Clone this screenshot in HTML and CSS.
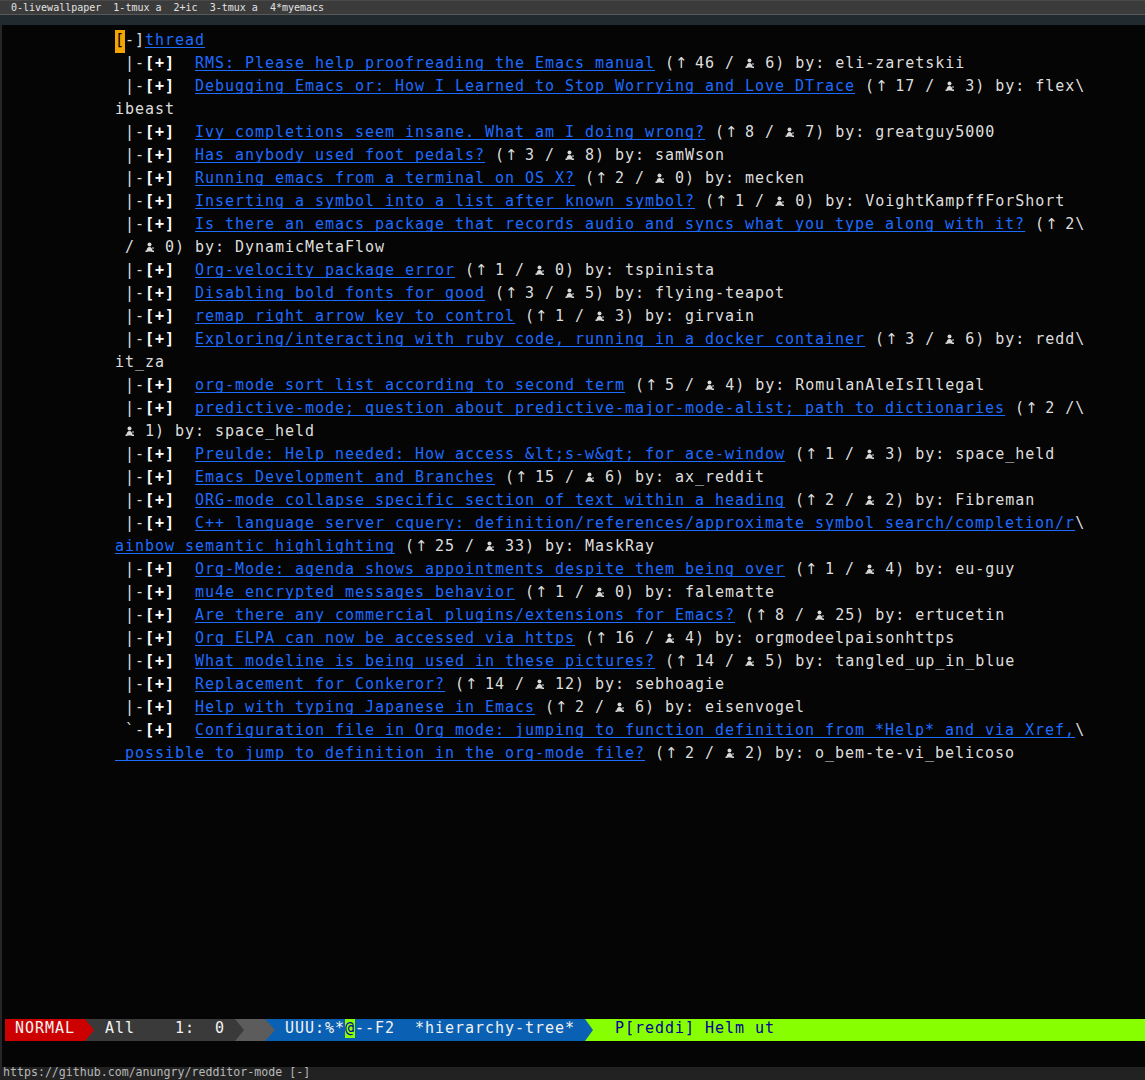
FILE: index.html
```html
<!DOCTYPE html>
<html>
<head>
<meta charset="utf-8">
<link rel="stylesheet" href="styles.css">
</head>
<body>
<div class="tmux">0-livewallpaper  1-tmux a  2+ic  3-tmux a  4*myemacs</div>
<div class="band"></div>
<div class="emacs">
  <div class="buf">
    <div class="l"><span class="cur">[</span>-]<a class="lk">thread</a></div>
    <div class="l"> |-<b>[+]</b>  <a class="lk">RMS: Please help proofreading the Emacs manual</a> (<span class="up">↑</span> 46 / <span class="ic"><svg width="10" height="10" viewBox="0 0 10 10"><circle cx="4.5" cy="2.5" r="2"/><path d="M1.5 9.5 Q1.5 5 4.5 5 Q7.5 5 7.5 9.5 Z"/><rect x="0.5" y="8.5" width="2" height="1.5"/><rect x="6.5" y="8.5" width="2.5" height="1.5"/><rect x="7" y="5.5" width="2" height="1"/></svg></span> 6) by: eli-zaretskii</div>
    <div class="l"> |-<b>[+]</b>  <a class="lk">Debugging Emacs or: How I Learned to Stop Worrying and Love DTrace</a> (<span class="up">↑</span> 17 / <span class="ic"><svg width="10" height="10" viewBox="0 0 10 10"><circle cx="4.5" cy="2.5" r="2"/><path d="M1.5 9.5 Q1.5 5 4.5 5 Q7.5 5 7.5 9.5 Z"/><rect x="0.5" y="8.5" width="2" height="1.5"/><rect x="6.5" y="8.5" width="2.5" height="1.5"/><rect x="7" y="5.5" width="2" height="1"/></svg></span> 3) by: flex\</div>
    <div class="l">ibeast</div>
    <div class="l"> |-<b>[+]</b>  <a class="lk">Ivy completions seem insane. What am I doing wrong?</a> (<span class="up">↑</span> 8 / <span class="ic"><svg width="10" height="10" viewBox="0 0 10 10"><circle cx="4.5" cy="2.5" r="2"/><path d="M1.5 9.5 Q1.5 5 4.5 5 Q7.5 5 7.5 9.5 Z"/><rect x="0.5" y="8.5" width="2" height="1.5"/><rect x="6.5" y="8.5" width="2.5" height="1.5"/><rect x="7" y="5.5" width="2" height="1"/></svg></span> 7) by: greatguy5000</div>
    <div class="l"> |-<b>[+]</b>  <a class="lk">Has anybody used foot pedals?</a> (<span class="up">↑</span> 3 / <span class="ic"><svg width="10" height="10" viewBox="0 0 10 10"><circle cx="4.5" cy="2.5" r="2"/><path d="M1.5 9.5 Q1.5 5 4.5 5 Q7.5 5 7.5 9.5 Z"/><rect x="0.5" y="8.5" width="2" height="1.5"/><rect x="6.5" y="8.5" width="2.5" height="1.5"/><rect x="7" y="5.5" width="2" height="1"/></svg></span> 8) by: samWson</div>
    <div class="l"> |-<b>[+]</b>  <a class="lk">Running emacs from a terminal on OS X?</a> (<span class="up">↑</span> 2 / <span class="ic"><svg width="10" height="10" viewBox="0 0 10 10"><circle cx="4.5" cy="2.5" r="2"/><path d="M1.5 9.5 Q1.5 5 4.5 5 Q7.5 5 7.5 9.5 Z"/><rect x="0.5" y="8.5" width="2" height="1.5"/><rect x="6.5" y="8.5" width="2.5" height="1.5"/><rect x="7" y="5.5" width="2" height="1"/></svg></span> 0) by: mecken</div>
    <div class="l"> |-<b>[+]</b>  <a class="lk">Inserting a symbol into a list after known symbol?</a> (<span class="up">↑</span> 1 / <span class="ic"><svg width="10" height="10" viewBox="0 0 10 10"><circle cx="4.5" cy="2.5" r="2"/><path d="M1.5 9.5 Q1.5 5 4.5 5 Q7.5 5 7.5 9.5 Z"/><rect x="0.5" y="8.5" width="2" height="1.5"/><rect x="6.5" y="8.5" width="2.5" height="1.5"/><rect x="7" y="5.5" width="2" height="1"/></svg></span> 0) by: VoightKampffForShort</div>
    <div class="l"> |-<b>[+]</b>  <a class="lk">Is there an emacs package that records audio and syncs what you type along with it?</a> (<span class="up">↑</span> 2\</div>
    <div class="l"> / <span class="ic"><svg width="10" height="10" viewBox="0 0 10 10"><circle cx="4.5" cy="2.5" r="2"/><path d="M1.5 9.5 Q1.5 5 4.5 5 Q7.5 5 7.5 9.5 Z"/><rect x="0.5" y="8.5" width="2" height="1.5"/><rect x="6.5" y="8.5" width="2.5" height="1.5"/><rect x="7" y="5.5" width="2" height="1"/></svg></span> 0) by: DynamicMetaFlow</div>
    <div class="l"> |-<b>[+]</b>  <a class="lk">Org-velocity package error</a> (<span class="up">↑</span> 1 / <span class="ic"><svg width="10" height="10" viewBox="0 0 10 10"><circle cx="4.5" cy="2.5" r="2"/><path d="M1.5 9.5 Q1.5 5 4.5 5 Q7.5 5 7.5 9.5 Z"/><rect x="0.5" y="8.5" width="2" height="1.5"/><rect x="6.5" y="8.5" width="2.5" height="1.5"/><rect x="7" y="5.5" width="2" height="1"/></svg></span> 0) by: tspinista</div>
    <div class="l"> |-<b>[+]</b>  <a class="lk">Disabling bold fonts for good</a> (<span class="up">↑</span> 3 / <span class="ic"><svg width="10" height="10" viewBox="0 0 10 10"><circle cx="4.5" cy="2.5" r="2"/><path d="M1.5 9.5 Q1.5 5 4.5 5 Q7.5 5 7.5 9.5 Z"/><rect x="0.5" y="8.5" width="2" height="1.5"/><rect x="6.5" y="8.5" width="2.5" height="1.5"/><rect x="7" y="5.5" width="2" height="1"/></svg></span> 5) by: flying-teapot</div>
    <div class="l"> |-<b>[+]</b>  <a class="lk">remap right arrow key to control</a> (<span class="up">↑</span> 1 / <span class="ic"><svg width="10" height="10" viewBox="0 0 10 10"><circle cx="4.5" cy="2.5" r="2"/><path d="M1.5 9.5 Q1.5 5 4.5 5 Q7.5 5 7.5 9.5 Z"/><rect x="0.5" y="8.5" width="2" height="1.5"/><rect x="6.5" y="8.5" width="2.5" height="1.5"/><rect x="7" y="5.5" width="2" height="1"/></svg></span> 3) by: girvain</div>
    <div class="l"> |-<b>[+]</b>  <a class="lk">Exploring/interacting with ruby code, running in a docker container</a> (<span class="up">↑</span> 3 / <span class="ic"><svg width="10" height="10" viewBox="0 0 10 10"><circle cx="4.5" cy="2.5" r="2"/><path d="M1.5 9.5 Q1.5 5 4.5 5 Q7.5 5 7.5 9.5 Z"/><rect x="0.5" y="8.5" width="2" height="1.5"/><rect x="6.5" y="8.5" width="2.5" height="1.5"/><rect x="7" y="5.5" width="2" height="1"/></svg></span> 6) by: redd\</div>
    <div class="l">it_za</div>
    <div class="l"> |-<b>[+]</b>  <a class="lk">org-mode sort list according to second term</a> (<span class="up">↑</span> 5 / <span class="ic"><svg width="10" height="10" viewBox="0 0 10 10"><circle cx="4.5" cy="2.5" r="2"/><path d="M1.5 9.5 Q1.5 5 4.5 5 Q7.5 5 7.5 9.5 Z"/><rect x="0.5" y="8.5" width="2" height="1.5"/><rect x="6.5" y="8.5" width="2.5" height="1.5"/><rect x="7" y="5.5" width="2" height="1"/></svg></span> 4) by: RomulanAleIsIllegal</div>
    <div class="l"> |-<b>[+]</b>  <a class="lk">predictive-mode; question about predictive-major-mode-alist; path to dictionaries</a> (<span class="up">↑</span> 2 /\</div>
    <div class="l"> <span class="ic"><svg width="10" height="10" viewBox="0 0 10 10"><circle cx="4.5" cy="2.5" r="2"/><path d="M1.5 9.5 Q1.5 5 4.5 5 Q7.5 5 7.5 9.5 Z"/><rect x="0.5" y="8.5" width="2" height="1.5"/><rect x="6.5" y="8.5" width="2.5" height="1.5"/><rect x="7" y="5.5" width="2" height="1"/></svg></span> 1) by: space_held</div>
    <div class="l"> |-<b>[+]</b>  <a class="lk">Preulde: Help needed: How access &amp;lt;s-w&amp;gt; for ace-window</a> (<span class="up">↑</span> 1 / <span class="ic"><svg width="10" height="10" viewBox="0 0 10 10"><circle cx="4.5" cy="2.5" r="2"/><path d="M1.5 9.5 Q1.5 5 4.5 5 Q7.5 5 7.5 9.5 Z"/><rect x="0.5" y="8.5" width="2" height="1.5"/><rect x="6.5" y="8.5" width="2.5" height="1.5"/><rect x="7" y="5.5" width="2" height="1"/></svg></span> 3) by: space_held</div>
    <div class="l"> |-<b>[+]</b>  <a class="lk">Emacs Development and Branches</a> (<span class="up">↑</span> 15 / <span class="ic"><svg width="10" height="10" viewBox="0 0 10 10"><circle cx="4.5" cy="2.5" r="2"/><path d="M1.5 9.5 Q1.5 5 4.5 5 Q7.5 5 7.5 9.5 Z"/><rect x="0.5" y="8.5" width="2" height="1.5"/><rect x="6.5" y="8.5" width="2.5" height="1.5"/><rect x="7" y="5.5" width="2" height="1"/></svg></span> 6) by: ax_reddit</div>
    <div class="l"> |-<b>[+]</b>  <a class="lk">ORG-mode collapse specific section of text within a heading</a> (<span class="up">↑</span> 2 / <span class="ic"><svg width="10" height="10" viewBox="0 0 10 10"><circle cx="4.5" cy="2.5" r="2"/><path d="M1.5 9.5 Q1.5 5 4.5 5 Q7.5 5 7.5 9.5 Z"/><rect x="0.5" y="8.5" width="2" height="1.5"/><rect x="6.5" y="8.5" width="2.5" height="1.5"/><rect x="7" y="5.5" width="2" height="1"/></svg></span> 2) by: Fibreman</div>
    <div class="l"> |-<b>[+]</b>  <a class="lk">C++ language server cquery: definition/references/approximate symbol search/completion/r</a>\</div>
    <div class="l"><a class="lk">ainbow semantic highlighting</a> (<span class="up">↑</span> 25 / <span class="ic"><svg width="10" height="10" viewBox="0 0 10 10"><circle cx="4.5" cy="2.5" r="2"/><path d="M1.5 9.5 Q1.5 5 4.5 5 Q7.5 5 7.5 9.5 Z"/><rect x="0.5" y="8.5" width="2" height="1.5"/><rect x="6.5" y="8.5" width="2.5" height="1.5"/><rect x="7" y="5.5" width="2" height="1"/></svg></span> 33) by: MaskRay</div>
    <div class="l"> |-<b>[+]</b>  <a class="lk">Org-Mode: agenda shows appointments despite them being over</a> (<span class="up">↑</span> 1 / <span class="ic"><svg width="10" height="10" viewBox="0 0 10 10"><circle cx="4.5" cy="2.5" r="2"/><path d="M1.5 9.5 Q1.5 5 4.5 5 Q7.5 5 7.5 9.5 Z"/><rect x="0.5" y="8.5" width="2" height="1.5"/><rect x="6.5" y="8.5" width="2.5" height="1.5"/><rect x="7" y="5.5" width="2" height="1"/></svg></span> 4) by: eu-guy</div>
    <div class="l"> |-<b>[+]</b>  <a class="lk">mu4e encrypted messages behavior</a> (<span class="up">↑</span> 1 / <span class="ic"><svg width="10" height="10" viewBox="0 0 10 10"><circle cx="4.5" cy="2.5" r="2"/><path d="M1.5 9.5 Q1.5 5 4.5 5 Q7.5 5 7.5 9.5 Z"/><rect x="0.5" y="8.5" width="2" height="1.5"/><rect x="6.5" y="8.5" width="2.5" height="1.5"/><rect x="7" y="5.5" width="2" height="1"/></svg></span> 0) by: falematte</div>
    <div class="l"> |-<b>[+]</b>  <a class="lk">Are there any commercial plugins/extensions for Emacs?</a> (<span class="up">↑</span> 8 / <span class="ic"><svg width="10" height="10" viewBox="0 0 10 10"><circle cx="4.5" cy="2.5" r="2"/><path d="M1.5 9.5 Q1.5 5 4.5 5 Q7.5 5 7.5 9.5 Z"/><rect x="0.5" y="8.5" width="2" height="1.5"/><rect x="6.5" y="8.5" width="2.5" height="1.5"/><rect x="7" y="5.5" width="2" height="1"/></svg></span> 25) by: ertucetin</div>
    <div class="l"> |-<b>[+]</b>  <a class="lk">Org ELPA can now be accessed via https</a> (<span class="up">↑</span> 16 / <span class="ic"><svg width="10" height="10" viewBox="0 0 10 10"><circle cx="4.5" cy="2.5" r="2"/><path d="M1.5 9.5 Q1.5 5 4.5 5 Q7.5 5 7.5 9.5 Z"/><rect x="0.5" y="8.5" width="2" height="1.5"/><rect x="6.5" y="8.5" width="2.5" height="1.5"/><rect x="7" y="5.5" width="2" height="1"/></svg></span> 4) by: orgmodeelpaisonhttps</div>
    <div class="l"> |-<b>[+]</b>  <a class="lk">What modeline is being used in these pictures?</a> (<span class="up">↑</span> 14 / <span class="ic"><svg width="10" height="10" viewBox="0 0 10 10"><circle cx="4.5" cy="2.5" r="2"/><path d="M1.5 9.5 Q1.5 5 4.5 5 Q7.5 5 7.5 9.5 Z"/><rect x="0.5" y="8.5" width="2" height="1.5"/><rect x="6.5" y="8.5" width="2.5" height="1.5"/><rect x="7" y="5.5" width="2" height="1"/></svg></span> 5) by: tangled_up_in_blue</div>
    <div class="l"> |-<b>[+]</b>  <a class="lk">Replacement for Conkeror?</a> (<span class="up">↑</span> 14 / <span class="ic"><svg width="10" height="10" viewBox="0 0 10 10"><circle cx="4.5" cy="2.5" r="2"/><path d="M1.5 9.5 Q1.5 5 4.5 5 Q7.5 5 7.5 9.5 Z"/><rect x="0.5" y="8.5" width="2" height="1.5"/><rect x="6.5" y="8.5" width="2.5" height="1.5"/><rect x="7" y="5.5" width="2" height="1"/></svg></span> 12) by: sebhoagie</div>
    <div class="l"> |-<b>[+]</b>  <a class="lk">Help with typing Japanese in Emacs</a> (<span class="up">↑</span> 2 / <span class="ic"><svg width="10" height="10" viewBox="0 0 10 10"><circle cx="4.5" cy="2.5" r="2"/><path d="M1.5 9.5 Q1.5 5 4.5 5 Q7.5 5 7.5 9.5 Z"/><rect x="0.5" y="8.5" width="2" height="1.5"/><rect x="6.5" y="8.5" width="2.5" height="1.5"/><rect x="7" y="5.5" width="2" height="1"/></svg></span> 6) by: eisenvogel</div>
    <div class="l"> `-<b>[+]</b>  <a class="lk">Configuration file in Org mode: jumping to function definition from *Help* and via Xref,</a>\</div>
    <div class="l"><a class="lk"> possible to jump to definition in the org-mode file?</a> (<span class="up">↑</span> 2 / <span class="ic"><svg width="10" height="10" viewBox="0 0 10 10"><circle cx="4.5" cy="2.5" r="2"/><path d="M1.5 9.5 Q1.5 5 4.5 5 Q7.5 5 7.5 9.5 Z"/><rect x="0.5" y="8.5" width="2" height="1.5"/><rect x="6.5" y="8.5" width="2.5" height="1.5"/><rect x="7" y="5.5" width="2" height="1"/></svg></span> 2) by: o_bem-te-vi_belicoso</div>
  </div>
  <div class="ml">
    <div class="seg red"> NORMAL</div>
    <div class="seg dark"><svg class="arr" width="9" height="22" viewBox="0 0 9 22"><path d="M0 0 L9 11 L0 22 Z" fill="#cc0000"/></svg> All    1:  0</div>
    <div class="seg mid"><svg class="arr" width="9" height="22" viewBox="0 0 9 22"><path d="M0 0 L9 11 L0 22 Z" fill="#3a3a3a"/></svg></div>
    <div class="seg blue"><svg class="arr" width="10" height="22" viewBox="0 0 10 22"><path d="M0 0 L10 11 L0 22 Z" fill="#5c5c5c"/></svg> UUU:%*<span class="at">@</span>--F2  *hierarchy-tree*</div>
    <div class="seg green"><svg class="arr" width="10" height="22" viewBox="0 0 10 22"><path d="M0 0 L8 11 L0 22 Z" fill="#0a60b2"/></svg>  P[reddi] Helm ut</div>
  </div>
  <div class="mini"></div>
</div>
<div class="status"><div class="stxt">https://github.com/anungry/redditor-mode [-]</div></div>
</body>
</html>
```

FILE: styles.css
```css
html, body {
  margin: 0;
  padding: 0;
  background: #050505;
}
body {
  width: 1145px;
  height: 1080px;
  overflow: hidden;
  font-family: "DejaVu Sans Mono", monospace;
}
.tmux {
  height: 13px;
  background: #3b3b3b;
  border-top: 1px solid #4a4a4a;
  border-bottom: 1px solid #585858;
  color: #e2e2e2;
  font-size: 10px;
  line-height: 14px;
  padding-left: 11px;
  white-space: pre;
  overflow: hidden;
}
.band {
  height: 10px;
  background: #212a2e;
}
.emacs {
  height: 1042px;
  border-left: 2px solid #262626;
  padding-left: 3px;
  background: #050505;
  display: flex;
  flex-direction: column;
}
.buf {
  height: 989px;
  padding-top: 5px;
  padding-left: 110px;
  font-size: 15px;
  letter-spacing: 0.97px;
  color: #dedede;
}
.l {
  height: 23px;
  line-height: 20px;
  white-space: pre;
}
.l b {
  font-weight: bold;
  color: #ffffff;
}
.lk {
  color: #1e6bff;
  text-decoration: underline;
  text-decoration-thickness: 1px;
  text-underline-offset: 2px;
  text-decoration-skip-ink: none;
}
.cur {
  display: inline-block;
  width: 10px;
  height: 23px;
  background: #f5a300;
  color: #000;
  vertical-align: top;
  letter-spacing: 0;
  line-height: 20px;
}
.up {
  font-family: "DejaVu Sans", sans-serif;
  font-size: 15px;
  letter-spacing: -2.57px;
}
.ic {
  display: inline-block;
  width: 10px;
  height: 10px;
  letter-spacing: 0;
}
.ic svg {
  display: block;
  fill: #d8d8d8;
}
.ml {
  height: 22px;
  display: flex;
  font-size: 15px;
  letter-spacing: 0.97px;
  line-height: 19px;
  white-space: pre;
  color: #f2f2f2;
}
.seg {
  height: 22px;
  display: flex;
  align-items: flex-start;
}
.arr {
  display: block;
  flex: none;
}
.red {
  width: 80px;
  background: #cc0000;
}
.dark {
  width: 150px;
  background: #3a3a3a;
}
.dark .arr { margin-right: 1px; }
.mid {
  width: 30px;
  background: #5c5c5c;
}
.blue {
  width: 320px;
  background: #0a60b2;
}
.at {
  background: #87ff00;
  color: #0000a8;
}
.green {
  flex: 1;
  background: #87ff00;
  color: #00009c;
}
.mini {
  height: 26px;
}
.status {
  height: 13px;
  background: #222222;
  overflow: hidden;
}
.stxt {
  margin-top: -3px;
  padding-left: 3px;
  font-size: 11.6px;
  line-height: 16px;
  color: #b8b8b8;
  white-space: pre;
}
```
